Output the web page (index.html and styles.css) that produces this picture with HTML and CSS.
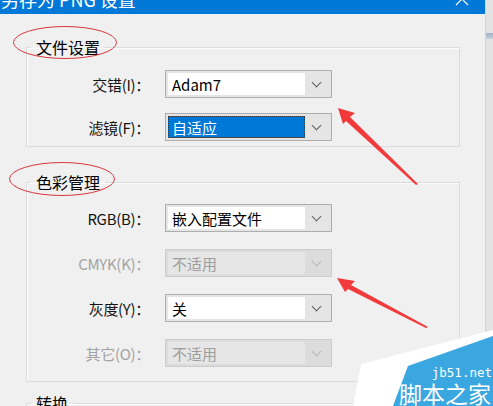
FILE: index.html
```html
<!DOCTYPE html>
<html lang="zh-CN">
<head>
    <meta charset="UTF-8">
    <title>另存为 PNG 设置</title>
    <link rel="stylesheet" href="styles.css">
</head>
<body>
    <div class="screen">
        <div class="dialog">
            <div class="titlebar">
                <span class="title">另存为 PNG 设置</span>
                <svg class="close" width="16" height="16" viewBox="0 0 16 16">
                    <path d="M2 2 L14 14 M14 2 L2 14" stroke="#fff" stroke-width="1.2" fill="none"/>
                </svg>
            </div>

            <fieldset class="group first">
                <legend>文件设置</legend>
                <div class="rows tight">
                    <label>交错(I)：</label>
                    <div class="combo">
                        <span class="field">Adam7</span>
                        <span class="arrow"></span>
                    </div>
                    <label>滤镜(F)：</label>
                    <div class="combo">
                        <span class="field selected">自适应</span>
                        <span class="arrow"></span>
                    </div>
                </div>
            </fieldset>

            <fieldset class="group second">
                <legend>色彩管理</legend>
                <div class="rows">
                    <label>RGB(B)：</label>
                    <div class="combo">
                        <span class="field">嵌入配置文件</span>
                        <span class="arrow"></span>
                    </div>
                    <label class="off">CMYK(K)：</label>
                    <div class="combo disabled">
                        <span class="field">不适用</span>
                        <span class="arrow"></span>
                    </div>
                    <label>灰度(Y)：</label>
                    <div class="combo">
                        <span class="field">关</span>
                        <span class="arrow"></span>
                    </div>
                    <label class="off">其它(O)：</label>
                    <div class="combo disabled">
                        <span class="field">不适用</span>
                        <span class="arrow"></span>
                    </div>
                </div>
            </fieldset>

            <fieldset class="group third">
                <legend>转换</legend>
            </fieldset>
        </div>
        <div class="backdrop">
            <div class="stripe"></div>
        </div>
    </div>

    <!-- annotations drawn over the screenshot -->
    <svg class="marks" width="493" height="406" viewBox="0 0 493 406">
        <ellipse cx="65" cy="42.5" rx="51.5" ry="16" fill="none" stroke="#d9363e" stroke-width="1"/>
        <ellipse cx="62" cy="179" rx="52.5" ry="16.5" fill="none" stroke="#d9363e" stroke-width="1"/>
        <polygon points="338,108 355,113 350,117 418,184 416,185 346,121 343,124" fill="#f23a3a"/>
        <polygon points="337,278 355,281 351,285 428,327 426,328 348,289 345,292" fill="#f23a3a"/>
    </svg>

    <div class="watermark">
        <svg width="140" height="76" viewBox="0 0 140 76">
            <polygon points="140,0 140,6 55,36 40,76 0,76 8,34" fill="#fff"/>
            <polygon points="140,6 140,76 40,76 55,36" fill="#3aa7e0"/>
        </svg>
        <span class="site">jb51.net</span>
        <span class="brand">脚本之家</span>
    </div>
</body>
</html>
```

FILE: styles.css
```css
body {
    margin: 0;
    font-family: "Noto Sans CJK SC", "Liberation Sans", sans-serif;
    background-color: #e6e6e6;
    overflow: hidden;
}
.screen {
    display: flex;
    width: 493px;
    height: 406px;
    overflow: hidden;
}
.dialog {
    width: 485px;
    flex-shrink: 0;
    background-color: #f0f0f0;
    border-right: 1px solid #d6d6d6;
}
.backdrop {
    flex: 1;
    background-color: #e3e3e3;
}
.stripe {
    height: 6px;
    margin-top: 33px;
    background: linear-gradient(#9fb0c4, #c8d2de);
}
.titlebar {
    display: flex;
    align-items: center;
    justify-content: space-between;
    height: 30px;
    margin-top: -16px;
    padding: 0 15px 0 1px;
    background-color: #0078d7;
    color: #fff;
}
.title {
    font-size: 18px;
    line-height: 30px;
}
.close {
    margin-top: -1px;
}

.group {
    width: 432px;
    margin: 0 0 0 26px;
    padding: 0;
    border: 1px solid #dcdcdc;
    box-shadow: inset 1px 1px 0 #fbfbfb;
}
.group legend {
    margin-left: 4px;
    padding: 0 5px;
    font-size: 16px;
    line-height: 20px;
    color: #000;
}
.group.first {
    margin-top: 23px;
    padding-top: 13px;
    padding-bottom: 5px;
}
.group.second {
    margin-top: 25px;
    padding-top: 12px;
    padding-bottom: 14px;
}
.group.third {
    margin-top: 11px;
    height: 40px;
}

.rows {
    display: grid;
    grid-template-columns: 123px 167px;
    column-gap: 15px;
    row-gap: 17px;
    align-items: center;
}
.rows.tight {
    row-gap: 15px;
}
.rows label {
    text-align: right;
    font-size: 15px;
    color: #141414;
    letter-spacing: -0.3px;
}
.rows label.off {
    color: #a3a3a3;
}

.combo {
    display: flex;
    height: 28px;
    box-sizing: border-box;
    padding: 2px;
    border: 1px solid #adadad;
    background-color: #e5e5e5;
}
.combo .field {
    flex: 1;
    display: flex;
    align-items: center;
    padding-left: 4px;
    background-color: #fff;
    font-size: 15px;
    color: #000;
}
.combo .field.selected {
    background-color: #0078d7;
    color: #fff;
    outline: 1px dotted #333;
    outline-offset: -1px;
}
.combo .arrow {
    width: 24px;
    position: relative;
}
.combo .arrow::after {
    content: "";
    position: absolute;
    left: 8px;
    top: 6px;
    width: 6px;
    height: 6px;
    border-right: 1.3px solid #5f5f5f;
    border-bottom: 1.3px solid #5f5f5f;
    transform: rotate(45deg);
}
.combo.disabled {
    border-color: #cccccc;
    background-color: #dcdcdc;
}
.combo.disabled .field {
    background-color: #e6e6e6;
    color: #9d9d9d;
}
.combo.disabled .arrow::after {
    border-color: #b8b8b8;
}

.marks {
    position: absolute;
    top: 0;
    left: 0;
    pointer-events: none;
}
.watermark {
    position: absolute;
    right: 0;
    bottom: 0;
    width: 140px;
    height: 76px;
}
.watermark svg {
    display: block;
}
.watermark .site {
    position: absolute;
    right: 1px;
    top: 36px;
    font-family: "DejaVu Sans Mono", monospace;
    font-size: 12.5px;
    line-height: 14px;
    color: #fff;
}
.watermark .brand {
    position: absolute;
    right: 2px;
    top: 51px;
    font-size: 23px;
    line-height: 24px;
    color: #fff;
}
```
